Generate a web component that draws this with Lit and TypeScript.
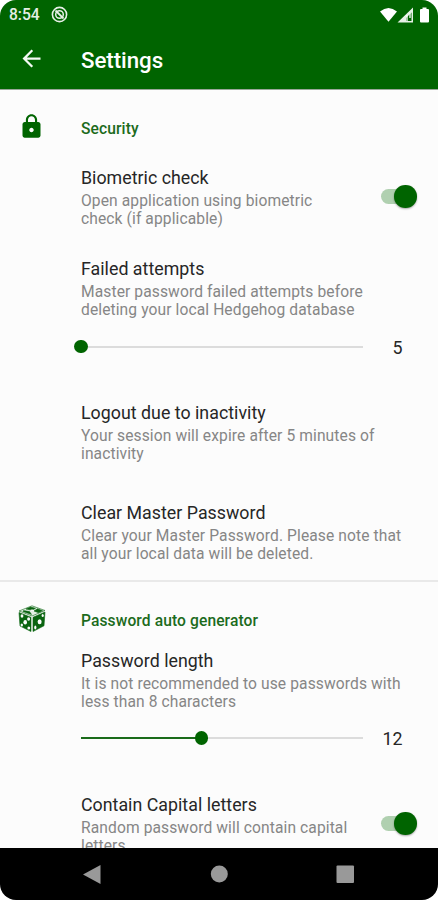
import { LitElement, html, css, svg, nothing } from "lit";
import { customElement, property } from "lit/decorators.js";

@customElement("pref-text")
class PrefText extends LitElement {
  @property() heading = "";
  @property({ attribute: false }) lines: string[] = [];
  static styles = css`
    :host { display: block; white-space: nowrap; }
    .title { font-size: 17.8px; line-height: 21px; color: #262626; letter-spacing: 0.02px; }
    .line { font-size: 15.6px; line-height: 18.4px; color: #868686; letter-spacing: 0.1px; }
    .summary { margin-top: 4px; }
  `;
  render() {
    return html`<div class="title">${this.heading}</div>
      <div class="summary">${this.lines.map((l) => html`<div class="line">${l}</div>`)}</div>`;
  }
}

@customElement("pref-switch")
class PrefSwitch extends LitElement {
  static styles = css`
    :host { display: flex; width: 36px; height: 24px; align-items: center; }
    .track { display: flex; align-items: center; justify-content: flex-end; width: 33.5px; height: 15.5px; border-radius: 8px; background: #b0d0b0; }
    .thumb { flex: none; width: 22.5px; height: 22.5px; margin-right: -2px; border-radius: 50%; background: #006400; box-shadow: 0 1px 2px #0005; }
  `;
  render() {
    return html`<div class="track"><div class="thumb"></div></div>`;
  }
}

@customElement("pref-slider")
class PrefSlider extends LitElement {
  @property({ type: Number }) value = 0;
  @property({ type: Number }) fraction = 0;
  static styles = css`
    :host { display: flex; align-items: center; height: 24px; }
    .bar { display: flex; align-items: center; width: 282px; height: 2px; background: #dcdcdc; }
    .fill { height: 2px; background: #1a6b1a; }
    .knob { flex: none; width: 13.5px; height: 13.5px; border-radius: 50%; background: #006400; margin-left: -6.75px; }
    .value { width: 39.5px; text-align: right; font-size: 17.8px; line-height: 22px; color: #262626; padding-top: 2px; }
  `;
  render() {
    return html`<div class="bar"><div class="fill" style="width:${this.fraction * 100}%"></div><div class="knob"></div></div>
      <div class="value">${this.value}</div>`;
  }
}

const lock = svg`<svg width="27" height="27" viewBox="0 0 24 24"><path fill="#006400" d="M18 8h-1V6c0-2.76-2.24-5-5-5S7 3.240 7 6v2H6c-1.100 0-2 .9-2 2v10c0 1.100.9 2 2 2h12c1.100 0 2-.9 2-2V10c0-1.100-.9-2-2-2zm-6 9c-1.100 0-2-.9-2-2s.9-2 2-2 2 .9 2 2-.9 2-2 2zm3.100-9H8.900V6c0-1.710 1.390-3.100 3.100-3.100s3.100 1.390 3.100 3.100v2z"/></svg>`;

const dice = svg`<svg width="28" height="30" viewBox="0 0 28 30">
  <g fill="#0a6410" stroke="#0a6410" stroke-width=".6" stroke-linejoin="round">
    <path fill="#e4efe4" d="M14 1.800 27 6.500 14 12 1 7Z"/>
    <path d="M1 8.500 13 13.300V27.500L2 22Z"/>
    <path d="M27 8 15 13.300V27.500L26 21.800Z"/>
    <path d="M12.500 3 17.500 4.300 14 6.300 8 5ZM19.500 4.800 24.500 6.700 20.500 8.700 16 7ZM5.500 6.600 11.500 7.600 13.500 10.400 5 7.500Z"/>
  </g>
  <g fill="#fcfcfc">
    <ellipse cx="4" cy="12" rx="1.400" ry="1.800"/><ellipse cx="10.600" cy="15" rx="1.500" ry="1.700"/>
    <ellipse cx="7.200" cy="18.300" rx="1.800" ry="2.200"/><ellipse cx="3.800" cy="21" rx="1.200" ry="1.500"/><ellipse cx="10.800" cy="24" rx="1.400" ry="1.600"/>
    <ellipse cx="24.700" cy="11.500" rx="1.100" ry="1.600"/><ellipse cx="21.600" cy="17.700" rx="2" ry="2.500"/><ellipse cx="17.300" cy="23.500" rx="1.100" ry="1.900"/>
    <ellipse cx="14" cy="6.300" rx="1.800" ry=".8"/>
  </g>
</svg>`;

@customElement("app-root")
class AppRoot extends LitElement {
  static styles = css`
    :host { display: block; width: 438px; height: 900px; background: #fff; font-family: Roboto, sans-serif; }
    .phone { display: flex; flex-direction: column; height: 900px; overflow: hidden; border-radius: 16px; background: #fcfcfc; }
    .top { flex: none; height: 89px; background: #006400; color: #fff; border-bottom: 1px solid #9aa79a; box-sizing: content-box; }
    .status { display: flex; align-items: center; height: 29px; padding: 0 8px 0 9px; }
    .clock { width: 41.5px; font-size: 15.6px; font-weight: 500; color: #e6efe6; }
    .grow { flex: 1; }
    .status svg, .back, .icon svg { display: block; }
    .bar { display: flex; align-items: center; height: 60px; padding-left: 18px; }
    .back { width: 63px; padding-top: 2px; }
    .heading { font-size: 22.3px; font-weight: 500; line-height: 28px; padding-top: 2px; letter-spacing: -.05px; }
    .content { flex: none; height: 758px; overflow: hidden; }
    .section { display: flex; align-items: center; height: 30px; }
    .icon { width: 63px; padding-left: 18px; }
    .label { font-size: 15.6px; font-weight: 500; color: #1c6b1c; letter-spacing: .1px; padding-top: 4px; }
    .first { padding-top: 21.500px; }
    .row { display: flex; padding-left: 81px; }
    .row pref-text { width: 300px; }
    .row pref-switch { margin-top: 18px; }
    .biometric { margin-top: 25px; height: 91px; }
    .failed { height: 77px; }
    .inactive { margin-top: 43px; height: 100.500px; }
    .clear { height: 77.500px; }
    .divider { height: 2px; background: #e9e9e9; }
    .generator { margin-top: 22px; }
    .length { margin-top: 16px; height: 76.500px; }
    .capital { margin-top: 43.500px; }
    .nav { flex: 1; display: flex; align-items: center; background: #000; padding-top: 1px; }
    .nav svg { display: block; }
  `;
  row(cls: string, heading: string, lines: string[], toggle = false) {
    return html`<div class="row ${cls}"><pref-text .heading=${heading} .lines=${lines}></pref-text>${toggle ? html`<pref-switch></pref-switch>` : nothing}</div>`;
  }
  render() {
    return html`<div class="phone">
      <div class="top">
        <div class="status">
          <div class="clock">8:54</div>
          <svg width="17" height="17" viewBox="0 0 17 17" fill="none" stroke="#e6efe6"><circle cx="8.500" cy="8.500" r="7.100" stroke-width="1.600"/><circle cx="8.500" cy="8.500" r="3.800" stroke-width="1.500"/><path d="M4.500 4.500 12.500 12.500" stroke-width="1.800"/></svg>
          <div class="grow"></div>
          <svg width="50" height="18" viewBox="0 0 50 18" fill="#fff"><path d="M0 5.500Q8.500-1.500 17 5.500L8.500 15.800Z"/><path fill-rule="evenodd" d="M17.500 16.500 33 1.500V16.500ZM26 15H31.500V6.500L26 12Z" opacity=".9"/><path d="M26 9h2v6h-2zM29 7h2v5h-2z" opacity=".65"/><path d="M42.500 1.500h4v1.500h1.500q1 0 1 1v11.500q0 1-1 1h-7q-1 0-1-1V4q0-1 1-1h1.500Z"/></svg>
        </div>
        <div class="bar">
          <div class="back"><svg width="27" height="27" viewBox="0 0 24 24"><path fill="#f4faf4" d="M20 11H7.830l5.590-5.590L12 4l-8 8 8 8 1.410-1.410L7.830 13H20v-2z"/></svg></div>
          <div class="heading">Settings</div>
        </div>
      </div>
      <div class="content">
        <div class="section first"><div class="icon">${lock}</div><div class="label">Security</div></div>
        ${this.row("biometric", "Biometric check", ["Open application using biometric", "check (if applicable)"], true)}
        ${this.row("failed", "Failed attempts", ["Master password failed attempts before", "deleting your local Hedgehog database"])}
        <div class="row"><pref-slider .value=${5} .fraction=${0}></pref-slider></div>
        ${this.row("inactive", "Logout due to inactivity", ["Your session will expire after 5 minutes of", "inactivity"])}
        ${this.row("clear", "Clear Master Password", ["Clear your Master Password. Please note that", "all your local data will be deleted."])}
        <div class="divider"></div>
        <div class="section generator"><div class="icon">${dice}</div><div class="label">Password auto generator</div></div>
        ${this.row("length", "Password length", ["It is not recommended to use passwords with", "less than 8 characters"])}
        <div class="row"><pref-slider .value=${12} .fraction=${0.428}></pref-slider></div>
        ${this.row("capital", "Contain Capital letters", ["Random password will contain capital", "letters"], true)}
      </div>
      <div class="nav"><svg width="438" height="52" viewBox="0 0 438 52" fill="#999"><path d="M83 25.500 100.500 16V35Z"/><circle cx="219.300" cy="25" r="8.500"/><rect x="336.500" y="16.500" width="17.500" height="17.500" rx="1"/></svg></div>
    </div>`;
  }
}
